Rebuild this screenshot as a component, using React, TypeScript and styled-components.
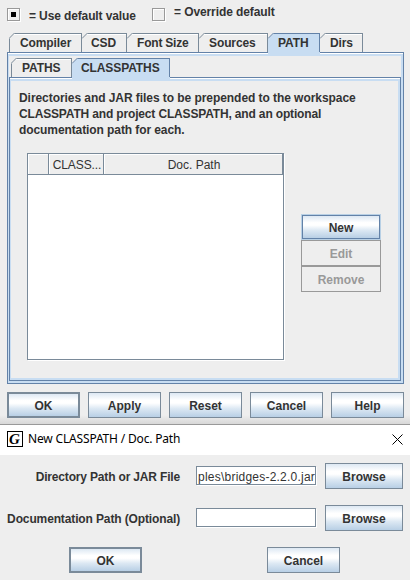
import React from "react";
import styled, { createGlobalStyle, css } from "styled-components";

const Global = createGlobalStyle`
  * { box-sizing: border-box; }
  body { margin: 0; background: #fff; }
`;

const edge = "#7a8a99";
const accent = "#6382a8";
const pale = "#c8ddf2";
const ink = "#333";

const Screen = styled.div`
  width: 410px;
  height: 580px;
  background: #eee;
  color: ${ink};
  font: bold 12px/16px "Liberation Sans", Arial, sans-serif;
  overflow: hidden;
`;

const Preferences = styled.section`
  height: 425px;
  padding: 0 6px 0 7px;
  background: linear-gradient(#eee 0 415px, #d8d8d8 424px, #999 424px);
`;

const Legend = styled.div`
  display: flex;
  height: 33px;
`;

const CheckBox = styled.span<{ $gap?: number }>`
  width: 13px;
  height: 13px;
  margin: 8px 9px 0 ${(p) => p.$gap ?? 0}px;
  border: 1px solid #999;
  box-shadow: 1px 1px 0 #fff, inset 1px 1px 0 #fff;
  display: grid;
  place-items: center;
`;

const Mark = styled.span`
  width: 5px;
  height: 5px;
  background: #000;
`;

const Text = styled.span<{ $width?: number; $spacing?: number; $top?: number; $left?: number }>`
  display: block;
  flex: none;
  white-space: pre;
  width: ${(p) => (p.$width ? `${p.$width}px` : "auto")};
  letter-spacing: ${(p) => p.$spacing ?? 0}px;
  margin-top: ${(p) => p.$top ?? 0}px;
  margin-left: ${(p) => p.$left ?? 0}px;
`;

const TabBar = styled.div`
  display: flex;
  height: 19px;
  padding-left: 2px;
`;

const TabButton = styled.div<{ $width: number; $selected?: boolean; $first?: boolean }>`
  position: relative;
  width: ${(p) => p.$width}px;
  height: 19px;
  flex: none;
  padding-top: 1px;
  border-top: 1px solid ${(p) => (p.$selected ? accent : edge)};
  border-right: 1px solid ${edge};
  box-shadow: inset 0 1px 0 ${(p) => (p.$selected ? pale : "#fff")};
  background: ${(p) => (p.$selected ? pale : "#eee")};
  ${(p) => p.$first && css`border-left: 1px solid ${edge};`}
  ${(p) => p.$selected && css`
    z-index: 1;
    height: 21px;
    border-right: 0;
    &::after {
      content: "";
      position: absolute;
      right: 0;
      top: 0;
      width: 1px;
      height: 18px;
      background: ${accent};
    }
  `}
`;

const Corner = styled.svg<{ $first?: boolean }>`
  position: absolute;
  left: ${(p) => (p.$first ? -1 : 0)}px;
  top: -1px;
`;

type TabProps = { label: string; width: number; left: number; spacing?: number; selected?: boolean; first?: boolean };

function Tab({ label, width, left, spacing = -0.1, selected, first }: TabProps) {
  return (
    <TabButton $width={width} $selected={selected} $first={first}>
      <Corner $first={first} width="6" height="6" viewBox="0 0 6 6">
        <path d="M0 0H6L0 6Z" fill="#eee" />
        <path d="M0 5.5L5.5 0" stroke={selected ? accent : edge} fill="none" />
      </Corner>
      <Text $left={left} $spacing={spacing}>{label}</Text>
    </TabButton>
  );
}

const OuterPane = styled.div`
  width: 397px;
  height: 332px;
  border: 1px solid ${accent};
  padding: 0 2px 2px 1px;
  background: linear-gradient(#fff 0 1px, ${pale} 1px);
`;

const InnerTabs = styled.div`
  height: 24px;
  padding-top: 5px;
  background: linear-gradient(#fff 0 1px, ${pale} 1px 3px, #eee 3px);
`;

const InnerPane = styled.div`
  height: 304px;
  border: 1px solid ${accent};
  background: #eee;
  box-shadow: inset 0 1px #fff, inset 0 3px ${pale}, inset -2px -2px ${pale}, inset 1px 0 ${pale};
  padding: 12px 0 0 9px;
`;

const Intro = styled.div`
  height: 63px;
`;

const Workspace = styled.div`
  display: flex;
  padding-left: 8px;
`;

const Table = styled.div`
  width: 257px;
  height: 207px;
  border: 1px solid ${edge};
  background: #fff;
  box-shadow: 1px 1px #fff;
`;

const TableHead = styled.div`
  display: flex;
  height: 21px;
  border-bottom: 1px solid ${edge};
  background: #eee;
  font-weight: normal;
`;

const HeadCell = styled.div<{ $width: number }>`
  width: ${(p) => p.$width}px;
  border-right: 1px solid ${edge};
  box-shadow: inset 1px 1px #fff;
  padding: 3px 0 0 2px;
  display: flex;
  justify-content: center;
`;

const Actions = styled.div`
  margin: 61px 0 0 17px;
  width: 80px;
`;

const Button = styled.button<{ $width?: number; $strong?: boolean; $flat?: boolean }>`
  display: block;
  flex: none;
  width: ${(p) => p.$width ?? 73}px;
  height: 26px;
  padding: 1px 0 0;
  margin: 0;
  border: ${(p) => (p.$strong ? 2 : 1)}px solid ${edge};
  border-radius: 0;
  color: ${ink};
  font: inherit;
  line-height: 16px;
  background: linear-gradient(#dde8f3 0%, #fff 30%, #fff 42%, #dce8f3 65%, #b8cfe5 100%);
  ${(p) => p.$flat && css`color: #999; border-color: #999; background: #eee;`}
`;

const FocusButton = styled(Button)`
  border: 2px solid ${accent};
  outline: 1px solid #b8d0e5;
  outline-offset: -1px;
`;

const Footer = styled.div`
  display: flex;
  justify-content: space-between;
  width: 397px;
  padding-top: 8px;
`;

const TitleBar = styled.header`
  display: flex;
  height: 30px;
  padding: 6px 7px 0;
  background: #fff;
  color: #000;
  font: 12px/16px "Noto Sans", "Open Sans", sans-serif;
`;

const CloseIcon = styled.svg`
  margin: 3px 0 0 auto;
`;

const Form = styled.section`
  padding-top: 8px;
`;

const Field = styled.div`
  display: flex;
  height: 42px;
`;

const Label = styled.div`
  width: 180px;
  padding-top: 6px;
  display: flex;
  justify-content: flex-end;
`;

const Input = styled.div`
  width: 120px;
  height: 19px;
  margin: 3px 9px 0 16px;
  border: 1px solid ${edge};
  background: #fff;
  box-shadow: 1px 1px #fff;
  font-weight: normal;
  padding-top: 2px;
  display: flex;
  justify-content: flex-end;
  overflow: hidden;
`;

const DialogActions = styled.div`
  display: flex;
  gap: 125px;
  padding-left: 69px;
`;

export default function App() {
  return (
    <>
      <Global />
      <Screen>
        <Preferences>
          <Legend>
            <CheckBox><Mark /></CheckBox>
            <Text $width={107} $top={8} $spacing={-0.12}>= Use default value</Text>
            <CheckBox $gap={16} />
            <Text $top={4} $spacing={-0.1}>= Override default</Text>
          </Legend>
          <TabBar>
            <Tab label="Compiler" width={73} left={10} first />
            <Tab label="CSD" width={45} left={9} />
            <Tab label="Font Size" width={72} left={10} spacing={-0.2} />
            <Tab label="Sources" width={69} left={10} />
            <Tab label="PATH" width={52} left={10} selected />
            <Tab label="Dirs" width={43} left={10} />
          </TabBar>
          <OuterPane>
            <InnerTabs>
              <TabBar>
                <Tab label="PATHS" width={61} left={10} first />
                <Tab label="CLASSPATHS" width={98} left={9} selected />
              </TabBar>
            </InnerTabs>
            <InnerPane>
              <Intro>
                <Text $spacing={-0.06}>Directories and JAR files to be prepended to the workspace</Text>
                <Text $spacing={-0.16}>CLASSPATH and project CLASSPATH, and an optional</Text>
                <Text $spacing={-0.09}>documentation path for each.</Text>
              </Intro>
              <Workspace>
                <Table>
                  <TableHead>
                    <HeadCell $width={21} />
                    <HeadCell $width={55}><Text $spacing={-0.1}>CLASS...</Text></HeadCell>
                    <HeadCell $width={179}>Doc. Path</HeadCell>
                  </TableHead>
                </Table>
                <Actions>
                  <FocusButton $width={80}>New</FocusButton>
                  <Button $width={80} $flat>Edit</Button>
                  <Button $width={80} $flat>Remove</Button>
                </Actions>
              </Workspace>
            </InnerPane>
          </OuterPane>
          <Footer>
            <Button $strong>OK</Button>
            <Button>Apply</Button>
            <Button>Reset</Button>
            <Button>Cancel</Button>
            <Button>Help</Button>
          </Footer>
        </Preferences>
        <TitleBar>
          <svg width="16" height="16" viewBox="0 0 16 16">
            <rect x=".5" y=".5" width="15" height="15" fill="#fff" stroke="#000" />
            <text x="2" y="13" fontFamily="Liberation Serif, serif" fontSize="15" fontWeight="bold" fontStyle="italic">G</text>
          </svg>
          <Text $left={5} $spacing={-0.17}>New CLASSPATH / Doc. Path</Text>
          <CloseIcon width="11" height="11" viewBox="0 0 11 11">
            <path d="M.5 .5L10.5 10.5M10.5 .5L.5 10.5" stroke="#000" />
          </CloseIcon>
        </TitleBar>
        <Form>
          <Field>
            <Label><Text $spacing={-0.17}>Directory Path or JAR File</Text></Label>
            <Input><Text $spacing={0.22}>ples\bridges-2.2.0.jar</Text></Input>
            <Button $width={78}>Browse</Button>
          </Field>
          <Field>
            <Label><Text $spacing={-0.13}>Documentation Path (Optional)</Text></Label>
            <Input />
            <Button $width={78}>Browse</Button>
          </Field>
          <DialogActions>
            <Button $strong>OK</Button>
            <Button>Cancel</Button>
          </DialogActions>
        </Form>
      </Screen>
    </>
  );
}
